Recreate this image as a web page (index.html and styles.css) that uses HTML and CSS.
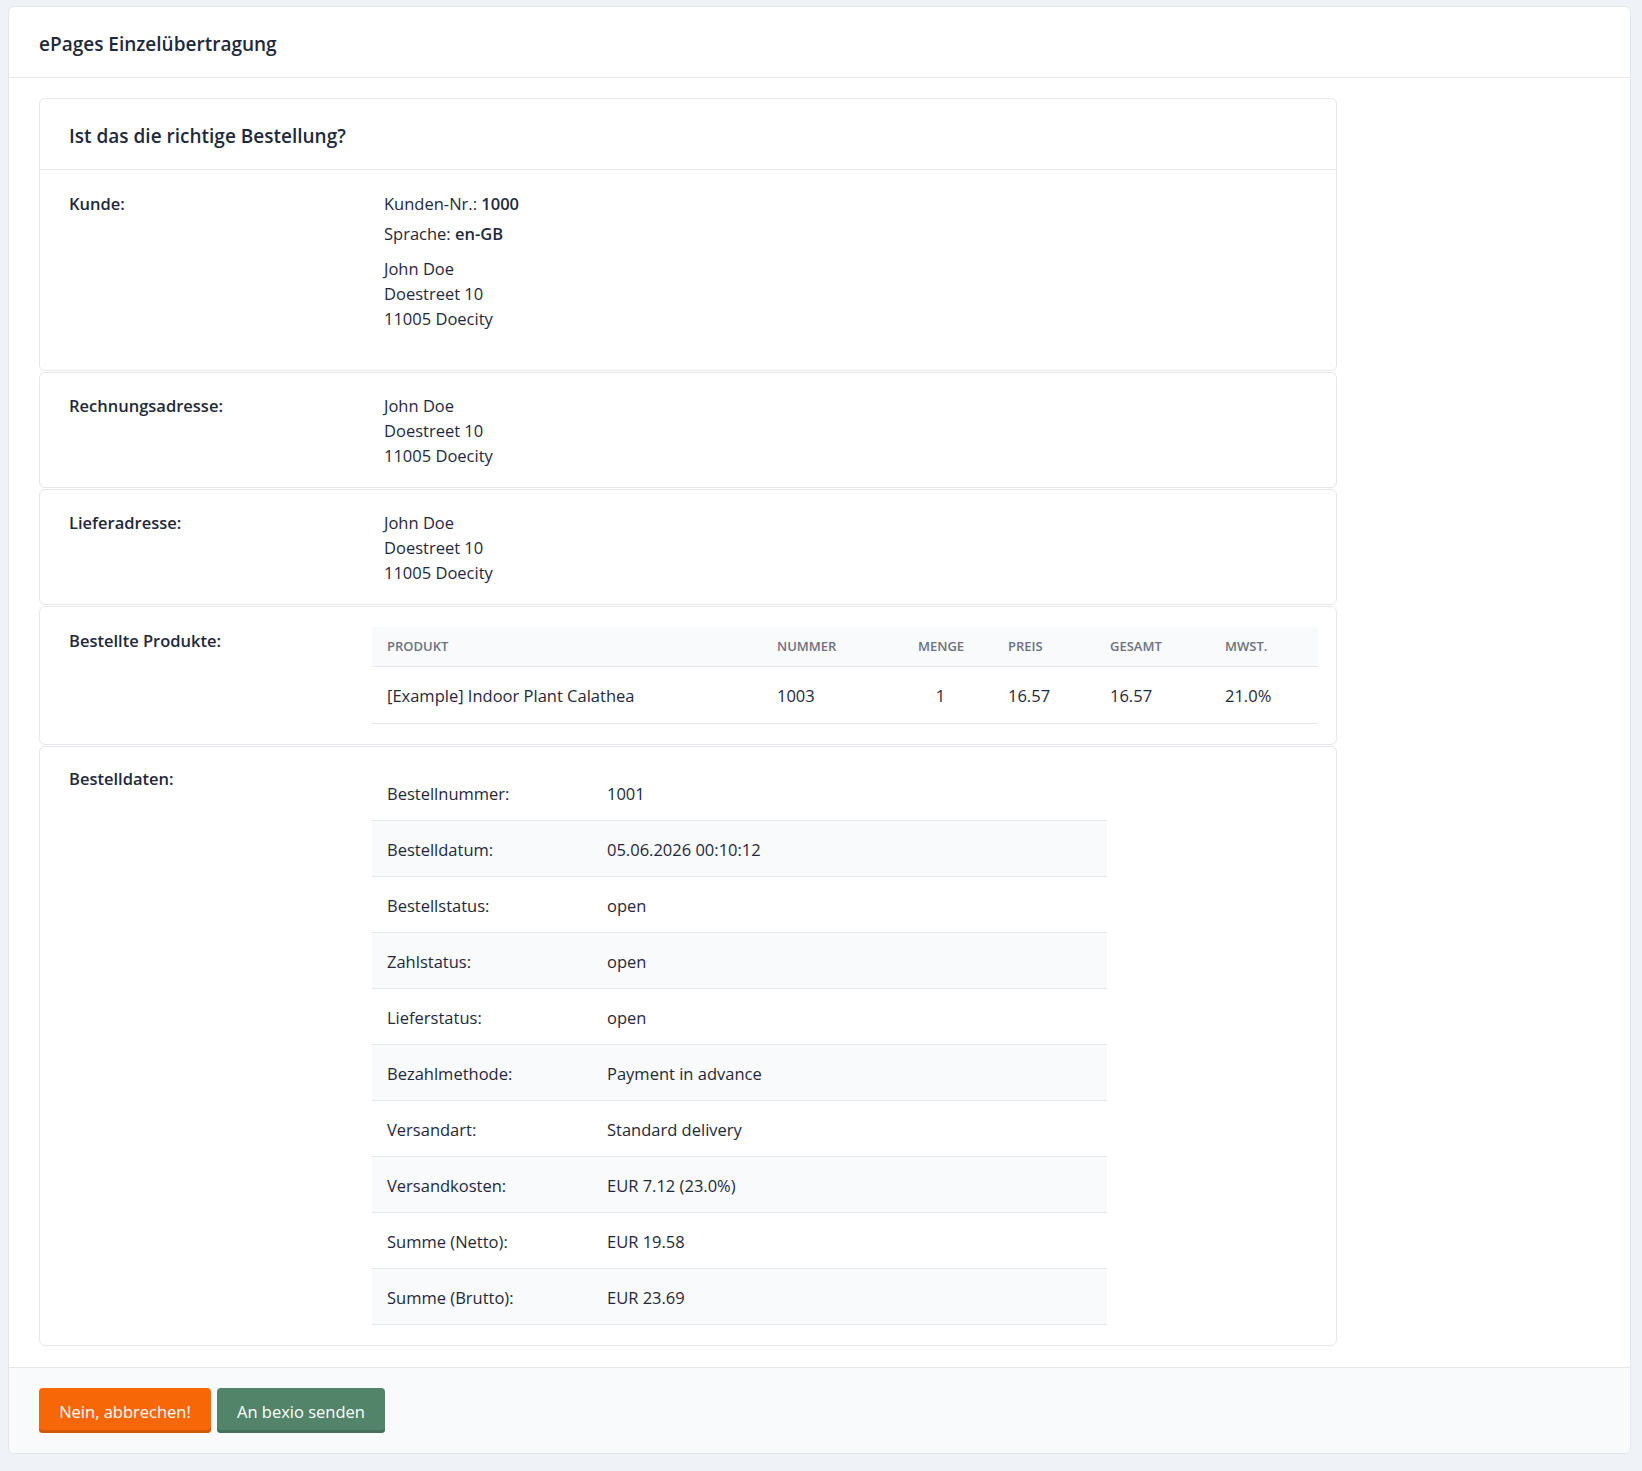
FILE: index.html
```html
<!DOCTYPE html>
<html lang="de">
<head>
<meta charset="utf-8">
<title>ePages Einzelübertragung</title>
<link rel="stylesheet" href="styles.css">
</head>
<body>
<div class="panel">
  <div class="panel-header">
    <h1 class="panel-title">ePages Einzelübertragung</h1>
  </div>
  <div class="panel-body">
    <div class="col">
      <div class="box">
        <div class="box-header">
          <h2 class="box-title">Ist das die richtige Bestellung?</h2>
        </div>
        <div class="box-row box-row-first">
          <div class="label">Kunde:</div>
          <div class="value">
            <p class="kv">Kunden-Nr.: <strong>1000</strong></p>
            <p class="kv">Sprache: <strong>en-GB</strong></p>
            <address class="addr addr-customer">John Doe<br>Doestreet 10<br>11005 Doecity</address>
          </div>
        </div>
      </div>

      <div class="box">
        <div class="box-row">
          <div class="label">Rechnungsadresse:</div>
          <div class="value">
            <address class="addr">John Doe<br>Doestreet 10<br>11005 Doecity</address>
          </div>
        </div>
      </div>

      <div class="box">
        <div class="box-row">
          <div class="label">Lieferadresse:</div>
          <div class="value">
            <address class="addr">John Doe<br>Doestreet 10<br>11005 Doecity</address>
          </div>
        </div>
      </div>

      <div class="box">
        <div class="box-row box-row-products">
          <div class="label">Bestellte Produkte:</div>
          <div class="value">
            <table class="products">
              <colgroup>
                <col class="c-prod"><col class="c-num"><col class="c-qty"><col class="c-price"><col class="c-total"><col class="c-vat">
              </colgroup>
              <thead>
                <tr>
                  <th>Produkt</th>
                  <th>Nummer</th>
                  <th>Menge</th>
                  <th>Preis</th>
                  <th>Gesamt</th>
                  <th>MwSt.</th>
                </tr>
              </thead>
              <tbody>
                <tr>
                  <td>[Example] Indoor Plant Calathea</td>
                  <td>1003</td>
                  <td class="qty">1</td>
                  <td>16.57</td>
                  <td>16.57</td>
                  <td>21.0%</td>
                </tr>
              </tbody>
            </table>
          </div>
        </div>
      </div>

      <div class="box">
        <div class="box-row box-row-details">
          <div class="label">Bestelldaten:</div>
          <div class="value">
            <table class="details">
              <tbody>
                <tr><td class="dk">Bestellnummer:</td><td>1001</td></tr>
                <tr><td class="dk">Bestelldatum:</td><td>05.06.2026 00:10:12</td></tr>
                <tr><td class="dk">Bestellstatus:</td><td>open</td></tr>
                <tr><td class="dk">Zahlstatus:</td><td>open</td></tr>
                <tr><td class="dk">Lieferstatus:</td><td>open</td></tr>
                <tr><td class="dk">Bezahlmethode:</td><td>Payment in advance</td></tr>
                <tr><td class="dk">Versandart:</td><td>Standard delivery</td></tr>
                <tr><td class="dk">Versandkosten:</td><td>EUR 7.12 (23.0%)</td></tr>
                <tr><td class="dk">Summe (Netto):</td><td>EUR 19.58</td></tr>
                <tr><td class="dk">Summe (Brutto):</td><td>EUR 23.69</td></tr>
              </tbody>
            </table>
          </div>
        </div>
      </div>
    </div>
  </div>
  <div class="panel-footer">
    <button class="btn btn-cancel" type="button">Nein, abbrechen!</button>
    <button class="btn btn-send" type="button">An bexio senden</button>
  </div>
</div>
</body>
</html>
```

FILE: styles.css
```css
* { box-sizing: border-box; }

html, body {
  margin: 0;
  padding: 0;
}

body {
  background: #eff2f7;
  font-family: "Open Sans", "Noto Sans", "Liberation Sans", sans-serif;
  font-size: 16.5px;
  color: #1e293b;
  padding: 6px 11px 17px 8px;
}

.panel {
  background: #ffffff;
  border: 1px solid #e3e6ea;
  border-radius: 6px;
}

.panel-header {
  padding: 25px 30px 21px;
  border-bottom: 1px solid #e5e7eb;
}

.panel-title {
  margin: 0;
  font-size: 19px;
  line-height: 24px;
  font-weight: 600;
  color: #1e293b;
}

.panel-body {
  padding: 20px 30px 21px 30px;
}

.col {
  width: 1298px;
  display: flex;
  flex-direction: column;
  gap: 1px;
}

.box {
  border: 1px solid #e5e7eb;
  border-radius: 6px;
  background: #fff;
}

.box-header {
  padding: 25px 29px 21px;
  border-bottom: 1px solid #e5e7eb;
}

.box-title {
  margin: 0;
  font-size: 19px;
  line-height: 24px;
  font-weight: 600;
  color: #1e293b;
}

.box-row {
  display: grid;
  grid-template-columns: 315px 1fr;
  padding: 20px 29px 19px;
}

.box-row-first {
  padding-top: 21px;
  padding-bottom: 19px;
}

.box-row-products {
  padding-top: 20px;
  padding-bottom: 20px;
}

.box-row-details {
  padding-top: 18px;
  padding-bottom: 20px;
}

.label {
  font-weight: 600;
  line-height: 25px;
}

.box-row-products .label,
.box-row-details .label {
  padding-top: 1px;
}

.value {
  line-height: 25px;
  min-width: 0;
}

.kv {
  margin: 0 0 5px 0;
}

.kv strong {
  font-weight: 600;
}

.addr {
  font-style: normal;
  margin: 0;
}

.addr-customer {
  margin-top: 10px;
  margin-bottom: 20px;
}

/* Products table */
.products {
  border-collapse: collapse;
  margin: 0 -11px 0 -12px;
  width: calc(100% + 23px);
  table-layout: fixed;
}

.c-prod { width: 390px; }
.c-num { width: 141px; }
.c-qty { width: 90px; }
.c-price { width: 102px; }
.c-total { width: 115px; }

.products th {
  background: #f9fafb;
  text-align: left;
  font-size: 13px;
  font-weight: 600;
  text-transform: uppercase;
  color: #6b7280;
  height: 39px;
  padding: 0 15px;
  border-bottom: 1px solid #e5e7eb;
}

.products td {
  height: 57px;
  padding: 2px 15px 0;
  border-bottom: 1px solid #e5e7eb;
  white-space: nowrap;
}

.products td.qty {
  text-align: center;
  padding-right: 30px;
}

/* Details table */
.details {
  border-collapse: collapse;
  margin-left: -12px;
  width: 735px;
}

.details td {
  height: 56px;
  padding: 2px 15px 0;
  border-bottom: 1px solid #e5e7eb;
}

.details td.dk {
  width: 220px;
}

.details tr:nth-child(even) td {
  background: #f9fafb;
}

/* Footer */
.panel-footer {
  background: #f9fafb;
  border-top: 1px solid #e5e7eb;
  border-radius: 0 0 6px 6px;
  padding: 20px 30px;
  display: flex;
  gap: 6px;
}

.btn {
  font-family: inherit;
  font-size: 16.5px;
  color: #ffffff;
  height: 45px;
  padding: 1px 20px 0;
  border: none;
  border-radius: 4px;
  cursor: pointer;
}

.btn-cancel {
  background: #f76707;
  box-shadow: inset 0 -3px 0 #d0590a;
  width: 172px;
}

.btn-send {
  background: #528469;
  box-shadow: inset 0 -3px 0 #45705a;
  width: 168px;
}
```
